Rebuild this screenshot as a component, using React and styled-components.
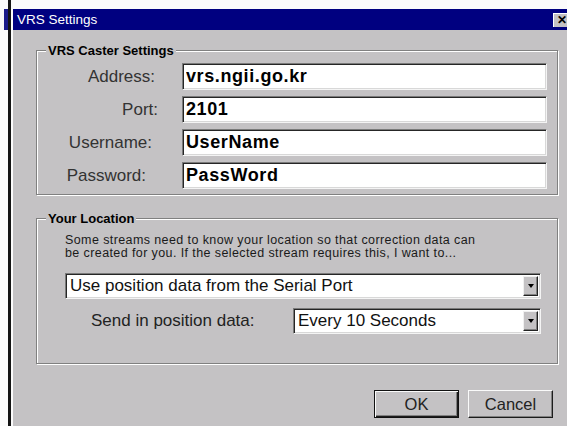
import React from "react";
import styled, { createGlobalStyle } from "styled-components";

const face = "#c4c2c4";

const GlobalStyle = createGlobalStyle`
  html, body {
    margin: 0;
    padding: 0;
    background: #fbfbfb;
  }
  body {
    font-family: "Liberation Sans", Arial, sans-serif;
  }
`;

const Screen = styled.div`
  display: flex;
  width: 567px;
  height: 426px;
  overflow: hidden;
  background: #fbfbfb;
`;

/* sliver of the window sitting behind the dialog */
const BackWindow = styled.div`
  width: 4px;
  padding: 9px 0 0 4px;
  border-right: 3px solid #141414;
  margin-right: 2px;
`;

const BackTitle = styled.div`
  height: 21px;
  background: #1c1c8a;
`;

const Dialog = styled.div`
  flex: 1;
  display: flex;
  flex-direction: column;
  padding-top: 9px;
`;

const TitleBar = styled.div`
  height: 21px;
  display: flex;
  align-items: center;
  justify-content: space-between;
  padding-left: 4px;
  background: #000080;
  color: #fff;
  font-size: 13.5px;
`;

const CloseButton = styled.div`
  width: 15px;
  height: 13px;
  margin-right: -2px;
  display: flex;
  align-items: center;
  justify-content: center;
  background: ${face};
  border-top: 1px solid #fff;
  border-left: 1px solid #fff;
  color: #000;
  font-weight: bold;
  font-size: 12px;
  line-height: 1;
`;

const Body = styled.div`
  flex: 1;
  display: flex;
  flex-direction: column;
  background: ${face};
  padding: 20px 9px 0 23px;
`;

const GroupBox = styled.div`
  position: relative;
  height: ${(p) => p.$height}px;
  box-sizing: border-box;
  margin-top: ${(p) => p.$top || 0}px;
  border: 1px solid #808080;
  box-shadow: 1px 1px 0 #fff, inset 1px 1px 0 #fff;
`;

const Legend = styled.div`
  position: absolute;
  top: -8px;
  left: 9px;
  padding: 0 2px;
  background: ${face};
  color: #000;
  font-weight: bold;
  font-size: 13px;
  line-height: 15px;
`;

const FieldGrid = styled.div`
  display: grid;
  grid-template-columns: 121px 1fr;
  column-gap: 24px;
  row-gap: 6px;
  padding: 12px 10px 0 0;
`;

const FieldLabel = styled.label`
  align-self: center;
  text-align: right;
  padding-right: ${(p) => p.$inset || 0}px;
  color: #333;
  font-size: 17px;
`;

const sunken = `
  box-sizing: border-box;
  background: #fff;
  border-style: solid;
  border-width: 1px;
  border-color: #7a7a7a #f4f4f4 #f4f4f4 #7a7a7a;
  box-shadow: inset 1px 1px 0 #262626, inset -1px -1px 0 #d8d8d8;
`;

const TextField = styled.input`
  ${sunken}
  height: 27px;
  width: 100%;
  padding: 0 3px;
  outline: none;
  font-family: "Liberation Sans", Arial, sans-serif;
  font-weight: bold;
  font-size: 18px;
  letter-spacing: 0.6px;
  color: #000;
`;

const LocationBody = styled.div`
  display: flex;
  flex-direction: column;
  padding: 15px 16px 0 28px;
`;

const Note = styled.p`
  margin: 0;
  color: #1a1a1a;
  font-size: 12.5px;
  letter-spacing: 0.4px;
  line-height: 13px;
`;

const Select = styled.div`
  ${sunken}
  display: flex;
  align-items: stretch;
  height: 26px;
  margin-top: ${(p) => p.$top || 0}px;
  padding: 2px;
`;

const SelectValue = styled.span`
  flex: 1;
  display: flex;
  align-items: center;
  padding-left: 2px;
  color: #111;
  font-size: 17px;
`;

const DropButton = styled.span`
  width: 13px;
  display: flex;
  align-items: center;
  justify-content: center;
  background: ${face};
  border-style: solid;
  border-width: 1px;
  border-color: #f0f0f0 #222 #222 #f0f0f0;
  box-shadow: inset -1px -1px 0 #808080;
`;

const Arrow = styled.span`
  width: 0;
  height: 0;
  border-left: 3.5px solid transparent;
  border-right: 3.5px solid transparent;
  border-top: 4px solid #000;
`;

const SendRow = styled.div`
  display: grid;
  grid-template-columns: 1fr 248px;
  align-items: center;
  margin-top: 9px;
`;

const SendLabel = styled.span`
  padding-left: 26px;
  color: #222;
  font-size: 17px;
`;

const ButtonRow = styled.div`
  display: flex;
  justify-content: flex-end;
  gap: 9px;
  margin-top: 26px;
  padding-right: 5px;
`;

const Button = styled.button`
  width: 85px;
  height: 28px;
  box-sizing: border-box;
  padding: 0;
  background: ${face};
  font-family: "Liberation Sans", Arial, sans-serif;
  font-size: 16.5px;
  color: #222;
  border-style: solid;
  border-width: 1px;
  border-color: ${(p) =>
    p.$default ? "#111" : "#fafafa #1c1c1c #1c1c1c #fafafa"};
  box-shadow: ${(p) =>
    p.$default
      ? "inset 1px 1px 0 #fafafa, inset -1px -1px 0 #1c1c1c, inset -2px -2px 0 #808080"
      : "inset -1px -1px 0 #808080"};
`;

const casterFields = [
  { label: "Address:", value: "vrs.ngii.go.kr", inset: 3 },
  { label: "Port:", value: "2101", inset: 0 },
  { label: "Username:", value: "UserName", inset: 6 },
  { label: "Password:", value: "PassWord", inset: 12 },
];

function Dropdown({ value, top }) {
  return (
    <Select $top={top}>
      <SelectValue>{value}</SelectValue>
      <DropButton>
        <Arrow />
      </DropButton>
    </Select>
  );
}

export default function App() {
  return (
    <Screen>
      <GlobalStyle />
      <BackWindow>
        <BackTitle />
      </BackWindow>
      <Dialog>
        <TitleBar>
          VRS Settings
          <CloseButton>✕</CloseButton>
        </TitleBar>
        <Body>
          <GroupBox $height={145}>
            <Legend>VRS Caster Settings</Legend>
            <FieldGrid>
              {casterFields.map((f) => (
                <React.Fragment key={f.label}>
                  <FieldLabel $inset={f.inset}>{f.label}</FieldLabel>
                  <TextField readOnly defaultValue={f.value} />
                </React.Fragment>
              ))}
            </FieldGrid>
          </GroupBox>

          <GroupBox $height={146} $top={23}>
            <Legend>Your Location</Legend>
            <LocationBody>
              <Note>
                Some streams need to know your location so that correction data can
                <br />
                be created for you. If the selected stream requires this, I want to...
              </Note>
              <Dropdown value="Use position data from the Serial Port" top={13} />
              <SendRow>
                <SendLabel>Send in position data:</SendLabel>
                <Dropdown value="Every 10 Seconds" />
              </SendRow>
            </LocationBody>
          </GroupBox>

          <ButtonRow>
            <Button $default>OK</Button>
            <Button>Cancel</Button>
          </ButtonRow>
        </Body>
      </Dialog>
    </Screen>
  );
}
